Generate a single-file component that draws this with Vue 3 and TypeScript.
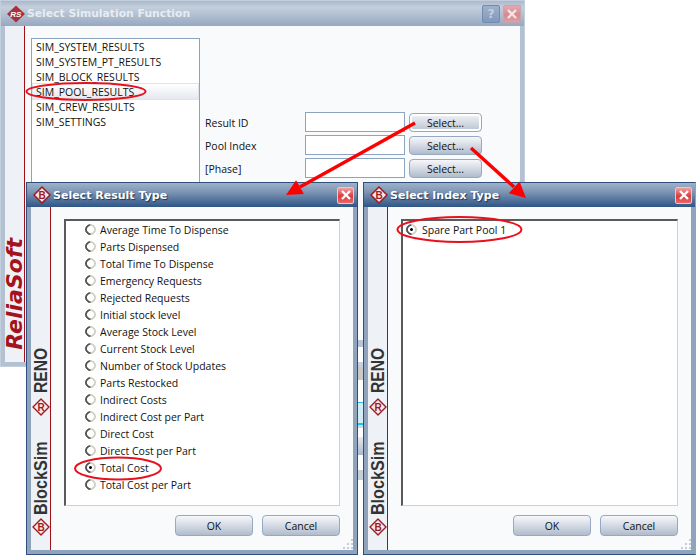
<template>
  <div class="desktop">
    <!-- main window behind -->
    <section class="window main-window">
      <header class="titlebar">
        <svg class="logo-rs" viewBox="0 0 18 18" width="18" height="18">
          <path d="M9 1.5 L17 9 L9 16.5 L1 9 Z" fill="#a8323a" stroke="#a8323a" stroke-width="1.5" stroke-linejoin="round" />
          <text x="8.8" y="11.8" text-anchor="middle" class="logo-rs-text">RS</text>
        </svg>
        <span class="title">Select Simulation Function</span>
        <button class="win-btn help">?</button>
        <button class="win-btn close">
          <svg viewBox="0 0 12 12" width="12" height="12"><path d="M2 2 L10 10 M10 2 L2 10" stroke="#f6e4e4" stroke-width="2.4" /></svg>
        </button>
      </header>
      <div class="window-body">
        <aside class="sidebar">
          <span class="brand">ReliaSoft</span>
        </aside>
        <div class="main-content">
          <ul class="function-list">
            <li v-for="fn in functions" :key="fn" :class="{ selected: fn === 'SIM_POOL_RESULTS' }">{{ fn }}</li>
          </ul>
          <div class="params">
            <div v-for="p in params" :key="p" class="param-row">
              <label>{{ p }}</label>
              <input type="text" />
              <button class="btn select-btn" :class="{ active: p === 'Result ID' }">Select...</button>
            </div>
          </div>
        </div>
      </div>
    </section>

    <!-- bits of other windows seen through the gap between the dialogs -->
    <div class="gap-strip"></div>

    <!-- the two child dialogs -->
    <section v-for="d in dialogs" :key="d.title" class="window dialog" :class="d.cls">
      <header class="titlebar">
        <svg class="logo-b" viewBox="0 0 18 18" width="18" height="18">
          <path d="M9 1 L17 9 L9 17 L1 9 Z" fill="#f6e8e8" stroke="#9b1c24" stroke-width="1.6" stroke-linejoin="round" />
          <text x="9" y="12.5" text-anchor="middle" class="logo-letter">B</text>
        </svg>
        <span class="title">{{ d.title }}</span>
        <button class="win-btn close">
          <svg viewBox="0 0 12 12" width="12" height="12"><path d="M2 2 L10 10 M10 2 L2 10" stroke="#fff" stroke-width="2.4" /></svg>
        </button>
      </header>
      <div class="window-body">
        <aside class="sidebar products">
          <span class="product reno">RENO</span>
          <svg class="logo-b" viewBox="0 0 18 18" width="18" height="18">
            <path d="M9 1 L17 9 L9 17 L1 9 Z" fill="#f6e8e8" stroke="#9b1c24" stroke-width="1.4" stroke-linejoin="round" />
            <text x="9" y="12.5" text-anchor="middle" class="logo-letter">R</text>
          </svg>
          <span class="product blocksim">BlockSim</span>
          <svg class="logo-b" viewBox="0 0 18 18" width="18" height="18">
            <path d="M9 1 L17 9 L9 17 L1 9 Z" fill="#f6e8e8" stroke="#9b1c24" stroke-width="1.4" stroke-linejoin="round" />
            <text x="9" y="12.5" text-anchor="middle" class="logo-letter">B</text>
          </svg>
        </aside>
        <div class="dialog-content">
          <div class="radio-box">
            <div v-for="opt in d.options" :key="opt" class="radio-row">
              <span class="radio" :class="{ checked: opt === d.selected }"></span>
              <span>{{ opt }}</span>
            </div>
          </div>
          <footer class="dialog-buttons">
            <button class="btn">OK</button>
            <button class="btn">Cancel</button>
          </footer>
        </div>
      </div>
      <svg class="grip" viewBox="0 0 12 12" width="12" height="12">
        <path d="M9 1h2v2h-2z M9 5h2v2h-2z M5 5h2v2h-2z M9 9h2v2h-2z M5 9h2v2h-2z M1 9h2v2h-2z" fill="#c3ccd8" />
      </svg>
    </section>

    <!-- red annotations on top of the screenshot -->
    <svg class="annotations" viewBox="0 0 696 555" width="696" height="555">
      <g fill="none" stroke="#e8101c" stroke-width="2">
        <ellipse cx="86" cy="91.5" rx="59.5" ry="8.5" />
        <ellipse cx="118" cy="468.5" rx="43" ry="11" />
        <ellipse cx="459.5" cy="229.5" rx="62" ry="12.5" />
      </g>
      <g stroke="#f00" stroke-width="3.4">
        <line x1="415" y1="123" x2="300" y2="187" />
        <line x1="471" y1="148" x2="514" y2="187" />
      </g>
      <path d="M286 195 L296.1 180.2 L303.9 194 Z" fill="#f00" />
      <path d="M526 198 L508.8 193.2 L519.6 181.4 Z" fill="#f00" />
    </svg>
  </div>
</template>

<script setup lang="ts">
const functions: string[] = [
  'SIM_SYSTEM_RESULTS',
  'SIM_SYSTEM_PT_RESULTS',
  'SIM_BLOCK_RESULTS',
  'SIM_POOL_RESULTS',
  'SIM_CREW_RESULTS',
  'SIM_SETTINGS',
]

const params: string[] = ['Result ID', 'Pool Index', '[Phase]']

interface DialogDef {
  title: string
  cls: string
  options: string[]
  selected: string
}

const dialogs: DialogDef[] = [
  {
    title: 'Select Result Type',
    cls: 'dialog-left',
    selected: 'Total Cost',
    options: [
      'Average Time To Dispense',
      'Parts Dispensed',
      'Total Time To Dispense',
      'Emergency Requests',
      'Rejected Requests',
      'Initial stock level',
      'Average Stock Level',
      'Current Stock Level',
      'Number of Stock Updates',
      'Parts Restocked',
      'Indirect Costs',
      'Indirect Cost per Part',
      'Direct Cost',
      'Direct Cost per Part',
      'Total Cost',
      'Total Cost per Part',
    ],
  },
  {
    title: 'Select Index Type',
    cls: 'dialog-right',
    selected: 'Spare Part Pool 1',
    options: ['Spare Part Pool 1'],
  },
]
</script>

<style>
html,
body {
  margin: 0;
  background: #fff;
}
</style>

<style scoped>
.desktop {
  position: relative;
  width: 696px;
  height: 555px;
  overflow: hidden;
  background: #fff;
  font-family: 'Open Sans', 'Liberation Sans', sans-serif;
  font-size: 10.5px;
  color: #111;
}

.window {
  position: absolute;
  box-sizing: border-box;
  display: flex;
  flex-direction: column;
}

.main-window {
  left: 0;
  top: 0;
  width: 525px;
  height: 367px;
  background: #b4c1d3;
  border: 1px solid #c3cedc;
  padding: 0 4px 4px;
}

.dialog {
  top: 182px;
  height: 373px;
  background: #8fa3bd;
  border: 1px solid #2f4f7e;
  padding: 0 4px 4px;
}

.dialog-left {
  left: 26px;
  width: 332px;
}

.dialog-right {
  left: 363px;
  width: 333px;
  border-right-color: #8fa3bd;
}

.titlebar {
  flex: none;
  display: flex;
  align-items: center;
  height: 25px;
  margin: 0 -4px;
  padding: 0 3px 0 6px;
}

.main-window .titlebar {
  background: linear-gradient(#a9b8cb, #c4cfdc 25%, #97a8c0);
}

.dialog .titlebar {
  height: 24px;
  background: linear-gradient(#9fb1c9, #7f97b6 35%, #2f5586);
}

.title {
  flex: 1;
  margin-left: 2px;
  font-family: 'DejaVu Sans', sans-serif;
  font-weight: bold;
  font-size: 11px;
  color: #fff;
  text-shadow: 1px 1px 1px #1c3557;
  white-space: nowrap;
}

.main-window .title {
  color: #e7ecf2;
  text-shadow: none;
  font-size: 10.8px;
}

.logo-rs-text {
  font-family: 'Liberation Sans', sans-serif;
  font-weight: bold;
  font-style: italic;
  font-size: 8px;
  fill: #fff;
}

.logo-letter {
  font-family: 'Liberation Sans', sans-serif;
  font-weight: bold;
  font-size: 10px;
  fill: #9b1c24;
}

.logo-b {
  flex: none;
}

.win-btn {
  display: flex;
  align-items: center;
  justify-content: center;
  width: 18px;
  height: 18px;
  padding: 0;
  margin-left: 3px;
  border: 1px solid #6f8bb0;
  border-radius: 2px;
  font-family: 'DejaVu Sans', sans-serif;
  font-weight: bold;
  font-size: 12px;
}

.win-btn.help {
  background: linear-gradient(#9fb1c9, #8099bb);
  color: #c6d0de;
}

.win-btn.close {
  background: linear-gradient(#e3aab0, #d78a90 55%, #dba0a6);
  border-color: #c2a5b0;
}

.dialog .win-btn.close {
  width: 17px;
  height: 17px;
  background: linear-gradient(#f3a09f, #dd3a3c 55%, #e4696a);
  border-color: #f0c5c7;
}

.window-body {
  flex: 1;
  min-height: 0;
  display: flex;
  background: #f8fafc;
}

.sidebar {
  flex: none;
  box-sizing: border-box;
  width: 20px;
  display: flex;
  flex-direction: column;
  align-items: center;
  justify-content: flex-end;
  background: #eef1f6;
  border-right: 1px solid #a01018;
}

.main-window .sidebar {
  width: 20px;
  padding-bottom: 12px;
}

.brand {
  writing-mode: vertical-rl;
  transform: rotate(180deg);
  font-family: 'DejaVu Sans', sans-serif;
  font-weight: bold;
  font-style: italic;
  font-size: 22px;
  line-height: 20px;
  color: #a5121c;
}

.products {
  padding-bottom: 14px;
}

.product {
  writing-mode: vertical-rl;
  font-family: 'Liberation Sans', sans-serif;
  font-weight: bold;
  font-size: 19px;
  line-height: 18px;
  color: #333;
}

.reno {
  transform: rotate(180deg) scaleY(0.82);
  margin-top: -5px;
  margin-bottom: 1px;
}

.blocksim {
  transform: rotate(180deg) scaleY(0.85);
  margin: 19px 0 -4px;
}

.main-content {
  flex: 1;
  min-width: 0;
  display: flex;
  padding: 12px 38px 0 6px;
  gap: 5px;
}

.function-list {
  box-sizing: border-box;
  flex: none;
  width: 169px;
  height: 150px;
  margin: 0;
  padding: 0 1px;
  list-style: none;
  background: #fff;
  border: 1px solid #8da4c0;
}

.function-list li {
  height: 15px;
  line-height: 17px;
  padding-left: 3px;
  white-space: nowrap;
}

.function-list li.selected {
  background: linear-gradient(#fff, #e5e8ee);
  box-shadow: 0 0 0 1px #dfe4ec;
}

.params {
  flex: 1;
  padding-top: 74px;
  display: flex;
  flex-direction: column;
  gap: 3px;
}

.param-row {
  display: flex;
  align-items: center;
  height: 20px;
}

.param-row label {
  flex: none;
  width: 100px;
  padding-top: 2px;
}

.param-row input {
  box-sizing: border-box;
  flex: none;
  width: 100px;
  height: 20px;
  margin: 0 4px 0 0;
  padding: 0;
  background: #fff;
  border: 1px solid #8da4c0;
}

.btn {
  box-sizing: border-box;
  padding: 0;
  font: inherit;
  color: #111;
  border: 1px solid #97a9c2;
  border-radius: 4px;
  background: linear-gradient(#f6f7fa, #dfe3ea 35%, #b0bccd);
}

.select-btn {
  width: 73px;
  height: 19px;
  padding-top: 1px;
}

.select-btn.active {
  background: linear-gradient(#f1f3f7, #dfe3ea 35%, #b9c3d2);
  box-shadow: inset 0 0 0 2px #fff;
}

.dialog-content {
  flex: 1;
  min-width: 0;
  display: flex;
  flex-direction: column;
  padding: 12px 13px 0 13px;
}

.radio-box {
  box-sizing: border-box;
  flex: none;
  height: 287px;
  padding: 0 0 0 19px;
  background: #fff;
  border: 2px solid;
  border-color: #5a5a5a #d4d0c8 #d4d0c8 #5a5a5a;
  border-right-width: 1px;
  border-bottom-width: 1px;
}

.dialog-right .radio-box {
  padding-left: 3px;
}

.dialog-right .radio-row {
  gap: 5px;
}

.radio-row {
  display: flex;
  align-items: center;
  gap: 4px;
  height: 17px;
  white-space: nowrap;
}

.radio {
  box-sizing: border-box;
  flex: none;
  display: flex;
  align-items: center;
  justify-content: center;
  width: 11px;
  height: 11px;
  border-radius: 50%;
  background: #fff;
  border: 2px solid;
  border-color: #555 #d4d0c8 #d4d0c8 #555;
  transform: rotate(-45deg);
}

.radio.checked::after {
  content: '';
  width: 3px;
  height: 3px;
  border-radius: 50%;
  background: #000;
}

.dialog-buttons {
  display: flex;
  justify-content: flex-end;
  gap: 9px;
  margin-top: 9px;
}

.dialog-buttons .btn {
  width: 78px;
  height: 21px;
}

.grip {
  position: absolute;
  right: 3px;
  bottom: 4px;
}

.gap-strip {
  position: absolute;
  left: 358px;
  top: 340px;
  width: 5px;
  height: 140px;
  background: linear-gradient(
    #b7c4d6 0 7px,
    #fff 7px 22px,
    #c6d0de 22px 27px,
    #c8c8c8 27px 40px,
    #fff 40px 62px,
    #2fb7e8 62px 63px,
    #d2edf5 63px 83px,
    #16c4f4 83px 85px,
    #cfd8e4 85px 88px,
    #fff 88px 97px,
    #e6e9f0 97px,
    #aab8cc 115px,
    #fff 115px 130px,
    #c6cedb 130px
  );
}

.annotations {
  position: absolute;
  left: 0;
  top: 0;
  pointer-events: none;
}
</style>
